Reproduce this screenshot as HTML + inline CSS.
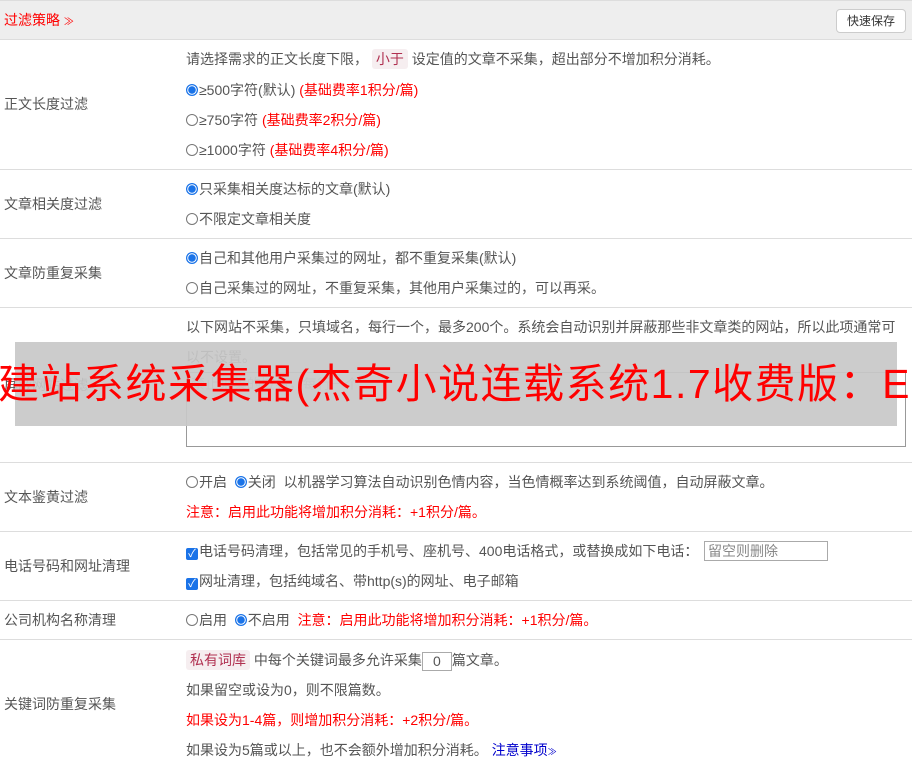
<!DOCTYPE html>
<html><head><meta charset="utf-8"><style>
*{margin:0;padding:0;box-sizing:border-box}
body{width:912px;height:768px;overflow:hidden;background:#fff;font-family:"Liberation Sans","Noto Sans CJK SC",sans-serif;font-size:14px;color:#555;position:relative}
.a{position:absolute;white-space:nowrap;line-height:18px}
.hl{position:absolute;left:0;width:912px;height:1px;background:#ddd}
.r{color:#f00}
.rd{display:inline-block;width:12px;height:12px;border:1px solid #777;border-radius:50%;vertical-align:-1px;margin-right:1px;background:#fff}
.rd.on{border:1px solid #1a73e8;background:radial-gradient(circle,#1a73e8 0 3.5px,#fff 4px 4.5px,#1a73e8 5px)}
.cb{display:inline-block;width:12px;height:12px;background:#1a73e8;border-radius:2px;vertical-align:-1px;margin-right:1px;color:#fff;font-size:11px;line-height:12px;text-align:center}
.tag{background:#f6eef0;color:#b03050;padding:2px 4px;border-radius:3px}
</style></head><body>
<div style="position:absolute;left:0;top:0;width:912px;height:40px;background:#eee;border-bottom:1px solid #ddd;border-top:1px solid #ddd"></div>
<div class="a r" style="left:4px;top:11px">过滤策略 <span style="font-size:10px">≫</span></div>
<div style="position:absolute;left:836px;top:9px;width:70px;height:24px;background:#fff;border:1px solid #ccc;border-radius:4px;font-size:12px;color:#333;text-align:center;line-height:22px">快速保存</div>

<div class="a" style="left:4px;top:95px">正文长度过滤</div>
<div class="a" style="left:186px;top:50px">请选择需求的正文长度下限， <span class="tag">小于</span> 设定值的文章不采集，超出部分不增加积分消耗。</div>
<div class="a" style="left:186px;top:81px"><span class="rd on"></span>≥500字符(默认) <span class="r">(基础费率1积分/篇)</span></div>
<div class="a" style="left:186px;top:111px"><span class="rd"></span>≥750字符 <span class="r">(基础费率2积分/篇)</span></div>
<div class="a" style="left:186px;top:141px"><span class="rd"></span>≥1000字符 <span class="r">(基础费率4积分/篇)</span></div>
<div class="hl" style="top:169px"></div>

<div class="a" style="left:4px;top:195px">文章相关度过滤</div>
<div class="a" style="left:186px;top:180px"><span class="rd on"></span>只采集相关度达标的文章(默认)</div>
<div class="a" style="left:186px;top:210px"><span class="rd"></span>不限定文章相关度</div>
<div class="hl" style="top:238px"></div>

<div class="a" style="left:4px;top:264px">文章防重复采集</div>
<div class="a" style="left:186px;top:249px"><span class="rd on"></span>自己和其他用户采集过的网址，都不重复采集(默认)</div>
<div class="a" style="left:186px;top:279px"><span class="rd"></span>自己采集过的网址，不重复采集，其他用户采集过的，可以再采。</div>
<div class="hl" style="top:307px"></div>

<div class="a" style="left:186px;top:318px">以下网站不采集，只填域名，每行一个，最多200个。系统会自动识别并屏蔽那些非文章类的网站，所以此项通常可</div>
<div class="a" style="left:186px;top:348px">以不设置。</div>
<div class="a" style="left:4px;top:376px">屏蔽网站过滤</div>
<div style="position:absolute;left:186px;top:372px;width:720px;height:75px;border:1px solid #999"><span class="a" style="left:4px;top:2px;color:#aaa">禁止采集的域名，每行一个</span></div>
<div style="position:absolute;left:15px;top:342px;width:882px;height:84px;background:rgba(200,200,200,.92)"></div>
<div class="a" style="left:-2px;top:360px;font-size:41px;line-height:48px;color:#f00;letter-spacing:1.5px">建站系统采集器(杰奇小说连载系统1.7收费版：E</div>
<div class="hl" style="top:462px"></div>

<div class="a" style="left:4px;top:488px">文本鉴黄过滤</div>
<div class="a" style="left:186px;top:473px"><span class="rd"></span>开启 &nbsp;<span class="rd on"></span>关闭 &nbsp;以机器学习算法自动识别色情内容，当色情概率达到系统阈值，自动屏蔽文章。</div>
<div class="a r" style="left:186px;top:503px">注意：启用此功能将增加积分消耗：+1积分/篇。</div>
<div class="hl" style="top:531px"></div>

<div class="a" style="left:4px;top:557px">电话号码和网址清理</div>
<div class="a" style="left:186px;top:542px"><span class="cb">✓</span>电话号码清理，包括常见的手机号、座机号、400电话格式，或替换成如下电话：</div>
<div style="position:absolute;left:704px;top:541px;width:124px;height:20px;border:1px solid #aaa;padding-left:3px;line-height:18px;color:#888;background:#fff">留空则删除</div>
<div class="a" style="left:186px;top:572px"><span class="cb">✓</span>网址清理，包括纯域名、带http(s)的网址、电子邮箱</div>
<div class="hl" style="top:600px"></div>

<div class="a" style="left:4px;top:611px">公司机构名称清理</div>
<div class="a" style="left:186px;top:611px"><span class="rd"></span>启用 &nbsp;<span class="rd on"></span>不启用 &nbsp;<span class="r">注意：启用此功能将增加积分消耗：+1积分/篇。</span></div>
<div class="hl" style="top:639px"></div>

<div class="a" style="left:4px;top:695px">关键词防重复采集</div>
<div class="a" style="left:186px;top:651px"><span class="tag">私有词库</span> 中每个关键词最多允许采集<span style="display:inline-block;width:30px;height:19px;border:1px solid #aaa;text-align:center;line-height:17px;vertical-align:-1px">0</span>篇文章。</div>
<div class="a" style="left:186px;top:681px">如果留空或设为0，则不限篇数。</div>
<div class="a r" style="left:186px;top:711px">如果设为1-4篇，则增加积分消耗：+2积分/篇。</div>
<div class="a" style="left:186px;top:741px">如果设为5篇或以上，也不会额外增加积分消耗。 <span style="color:#00c">注意事项<span style="font-size:9px">≫</span></span></div>
</body></html>
